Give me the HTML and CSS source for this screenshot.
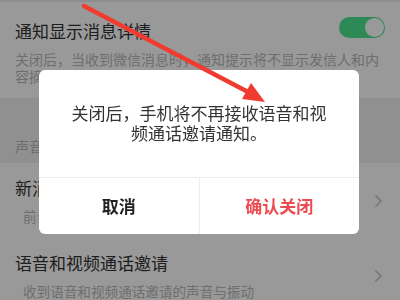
FILE: index.html
```html
<!DOCTYPE html>
<html lang="zh-CN">
<head>
<meta charset="utf-8">
<title>新消息通知</title>
<link rel="stylesheet" href="styles.css">
</head>
<body>
<div class="page">
  <div class="cell cell-switch">
    <div class="cell-head">
      <div class="cell-title">通知显示消息详情</div>
      <div class="toggle"><span class="knob"></span></div>
    </div>
    <p class="cell-desc">关闭后，当收到微信消息时，通知提示将不显示发信人和内容摘要</p>
  </div>
  <div class="section-label">声音</div>
  <div class="cell cell-nav">
    <div class="cell-body">
      <div class="cell-title">新消息通知</div>
      <p class="cell-desc indent">前台时</p>
    </div>
    <svg class="chevron" width="9" height="14" viewBox="0 0 9 14"><polyline points="1.5,1.5 7,7 1.5,12.5" fill="none" stroke="#c4c4c4" stroke-width="1.6"/></svg>
  </div>
  <div class="cell cell-nav">
    <div class="cell-body">
      <div class="cell-title">语音和视频通话邀请</div>
      <p class="cell-desc indent">收到语音和视频通话邀请的声音与振动</p>
    </div>
    <svg class="chevron" width="9" height="14" viewBox="0 0 9 14"><polyline points="1.5,1.5 7,7 1.5,12.5" fill="none" stroke="#c4c4c4" stroke-width="1.6"/></svg>
  </div>
</div>

<div class="mask">
  <div class="dialog">
    <div class="dialog-body">关闭后，手机将不再接收语音和视频通话邀请通知。</div>
    <div class="dialog-actions">
      <div class="btn btn-cancel">取消</div>
      <div class="btn btn-confirm">确认关闭</div>
    </div>
  </div>
</div>

<svg class="arrow" width="400" height="300" viewBox="0 0 400 300">
  <line x1="84" y1="6" x2="250" y2="93" stroke="#f03c30" stroke-width="4.5" stroke-linecap="round"/>
  <polygon points="265,102 242,99 251,83" fill="#f03c30"/>
</svg>
</body>
</html>
```

FILE: styles.css
```css
* { box-sizing: border-box; }

html, body {
  margin: 0;
  width: 400px;
  height: 300px;
  overflow: hidden;
}

body {
  background: #fff;
  font-family: "Noto Sans CJK SC", "Noto Sans", sans-serif;
  color: #333;
}

.page {
  width: 400px;
  border-top: 2px solid #ececec;
}

.cell {
  background: #fff;
}

.cell-switch {
  padding: 15px 12px 13px 15px;
}

.cell-head {
  display: flex;
  justify-content: space-between;
  align-items: flex-start;
}

.cell-title {
  font-size: 17px;
  line-height: 28px;
  color: #333;
}

.cell-nav .cell-title {
  line-height: 24px;
}

.toggle {
  width: 46px;
  height: 21px;
  margin-top: 0;
  margin-right: 3px;
  border-radius: 11px;
  background: #4ce690;
  display: flex;
  justify-content: flex-end;
  align-items: center;
  padding: 1px;
}

.knob {
  width: 19px;
  height: 19px;
  border-radius: 50%;
  background: #fff;
}

.cell-desc {
  margin: 6px 0 0;
  font-size: 14px;
  line-height: 17px;
  color: #b8b8b8;
}

.section-label {
  background: #f0f0f0;
  padding: 38px 15px 7px;
  font-size: 14px;
  line-height: 20px;
  color: #b8b8b8;
}

.cell-nav {
  display: flex;
  align-items: center;
  justify-content: space-between;
  padding: 13px 17px 13px 15px;
}

.cell-nav .cell-desc {
  margin-top: 7px;
  font-size: 13.6px;
  line-height: 18px;
}

.cell-desc.indent {
  padding-left: 8px;
}

.chevron {
  display: block;
  flex: none;
}

.mask {
  position: fixed;
  inset: 0;
  background: rgba(0, 0, 0, 0.4);
  display: flex;
  align-items: center;
  justify-content: center;
  padding: 3px 2px 0 0;
}

.dialog {
  width: 320px;
  background: #fff;
  border-radius: 6px;
  overflow: hidden;
}

.dialog-body {
  padding: 33px 26px 34px;
  font-size: 17px;
  line-height: 20px;
  text-align: center;
  color: #333;
}

.dialog-actions {
  display: flex;
  border-top: 1px solid #ececec;
}

.btn {
  flex: 1;
  height: 56px;
  display: flex;
  align-items: center;
  justify-content: center;
  font-size: 17px;
  font-weight: 700;
}

.btn-cancel {
  color: #222;
  border-right: 1px solid #ececec;
}

.btn-confirm {
  color: #ec4b4f;
}

.arrow {
  position: fixed;
  left: 0;
  top: 0;
  pointer-events: none;
}
```
